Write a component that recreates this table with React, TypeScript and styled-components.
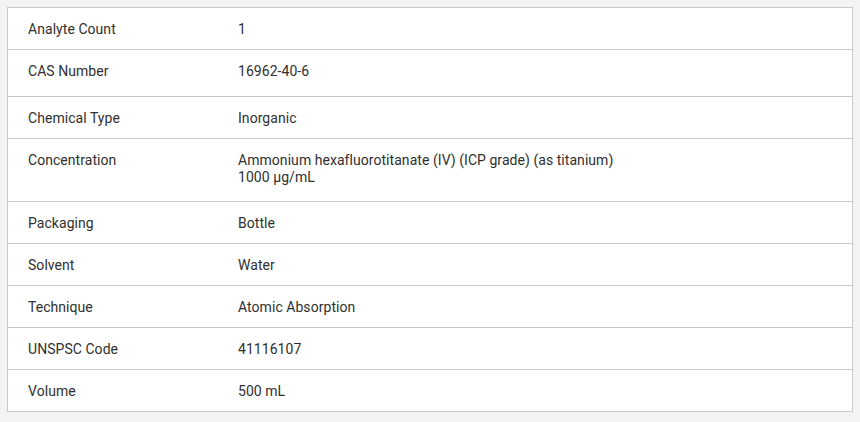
import React from "react";
import styled, { createGlobalStyle } from "styled-components";

const Global = createGlobalStyle`
  html, body { margin: 0; padding: 0; background: #f3f3f3; }
  body { font-family: Roboto, "Liberation Sans", Arial, sans-serif; }
`;

const Page = styled.div`
  padding: 7px 7px 10px 7px;
  width: 860px;
  box-sizing: border-box;
`;

const Table = styled.div`
  background: #ffffff;
  border: 1px solid #c9c9c9;
  border-bottom: none;
  display: flex;
  flex-direction: column;
`;

const Row = styled.div<{ $bottom?: number }>`
  display: grid;
  grid-template-columns: 210px 1fr;
  border-bottom: 1px solid #c9c9c9;
  padding: 13px 0 ${(p) => p.$bottom ?? 11}px 20px;
  font-size: 14px;
  line-height: 17px;
  letter-spacing: 0.05px;
  color: #303030;
`;

const Label = styled.div``;
const Value = styled.div``;

const rows: { label: string; value: string[]; bottom?: number }[] = [
  { label: "Analyte Count", value: ["1"] },
  { label: "CAS Number", value: ["16962-40-6"], bottom: 16 },
  { label: "Chemical Type", value: ["Inorganic"] },
  {
    label: "Concentration",
    value: ["Ammonium hexafluorotitanate (IV) (ICP grade) (as titanium)", "1000 µg/mL"],
    bottom: 15,
  },
  { label: "Packaging", value: ["Bottle"] },
  { label: "Solvent", value: ["Water"] },
  { label: "Technique", value: ["Atomic Absorption"] },
  { label: "UNSPSC Code", value: ["41116107"] },
  { label: "Volume", value: ["500 mL"] },
];

export default function App() {
  return (
    <>
      <Global />
      <Page>
        <Table>
          {rows.map((r) => (
            <Row key={r.label} $bottom={r.bottom}>
              <Label>{r.label}</Label>
              <Value>
                {r.value.map((v, i) => (
                  <div key={i}>{v}</div>
                ))}
              </Value>
            </Row>
          ))}
        </Table>
      </Page>
    </>
  );
}
